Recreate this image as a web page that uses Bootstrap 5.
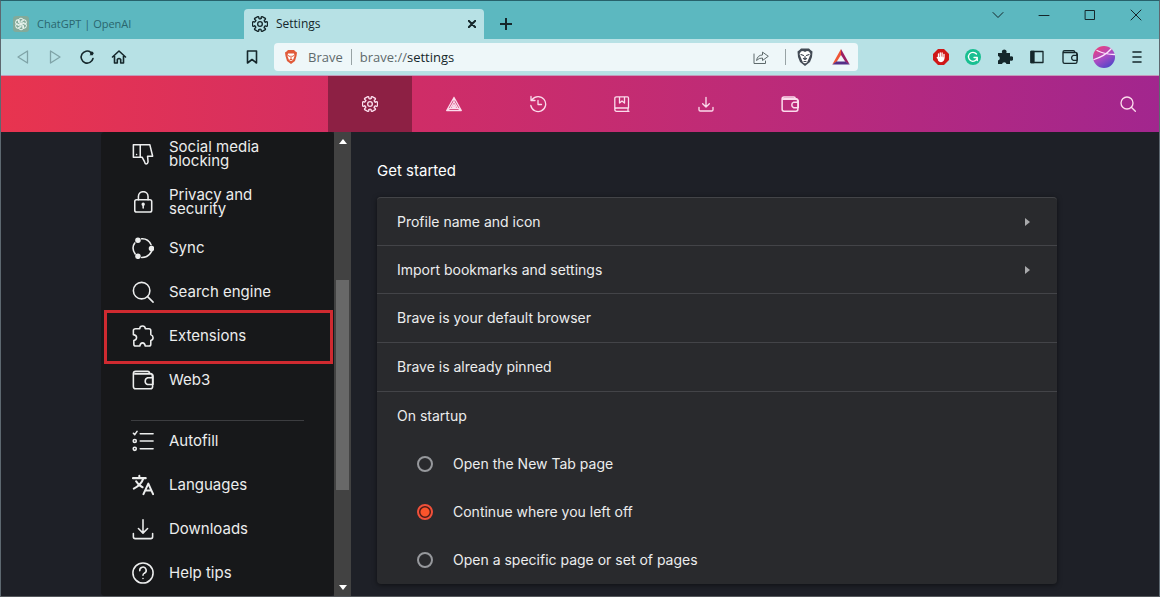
<!DOCTYPE html>
<html lang="en" data-bs-theme="dark">
<head>
<meta charset="utf-8">
<meta name="viewport" content="width=device-width, initial-scale=1">
<title>Settings</title>
<link href="https://cdn.jsdelivr.net/npm/bootstrap@5.3.0/dist/css/bootstrap.min.css" rel="stylesheet">
<style>
  body { font-family: Inter, "Open Sans", sans-serif; font-size: 14px; line-height: 20px; background: #1e2027; color: #eceded; }
  .window { border: 1px solid #5d6870; border-top-color: #27616b; border-bottom-color: #55585c; }
  svg { display: block; fill: none; stroke: currentColor; stroke-width: 2; stroke-linecap: round; stroke-linejoin: round; }
  button { background: none; border: 0; padding: 0; color: inherit; }
  .i16 { width: 16px; height: 16px; } .i18 { width: 18px; height: 18px; } .i22 { width: 22px; height: 22px; }
  .hair { stroke-width: 1; } .fine { stroke-width: 1.3; } .medium { stroke-width: 1.6; }

  /* Browser chrome */
  .chrome { font-family: "Open Sans", sans-serif; color: #15272b; font-size: 12px; }
  .tabstrip { background: #5cb8c0; height: 38px; }
  .page-tab { height: 30px; width: 240px; color: #15272b; }
  .page-tab.open { background: #b7e1e5; border-radius: 4px 4px 0 0; }
  .page-tab.idle { width: 243px; color: #2a666e; font-size: 11px; }
  .new-tab { width: 44px; height: 30px; }
  .win-btn { width: 46px; height: 28px; }
  .win-btn svg { width: 12px; height: 12px; stroke-width: 1; }
  .toolbar { background: #b7e1e5; height: 37px; display: grid; grid-template-columns: 273fr 584fr 301fr; border-bottom: 1px solid #c39abb; }
  .tools { padding: 0 6px; }
  .tool { width: 32px; height: 28px; }
  .tool.wide { width: 34px; }
  .faded { color: #7fa3a7; }
  .address { background: #eef7f9; border-radius: 4px; height: 28px; font-size: 13px; color: #5e6a6c; }
  .address b { font-weight: 400; color: #15272b; }
  .rule { width: 1px; height: 16px; background: #98a3a5; }

  /* Page navigation */
  .topnav { height: 56px; background: linear-gradient(90deg, #e8344f 0%, #cf2d67 36%, #bd2b78 65%, #a2268e 100%); display: grid; grid-template-columns: 1fr auto 1fr; color: #fbdcec; }
  .topnav a { width: 84px; color: inherit; }
  .topnav a.current { background: #8d2044; }
  .find { margin: 0 23px 0 auto; }

  .layout { max-width: 958px; min-height: 0; }
  .side { width: 233px; background: #17181a; border-radius: 4px; overflow: hidden; }
  .side ul { margin: -2px 0 0; }
  .side a { height: 44px; padding-left: 31px; gap: 15px; color: #eceded; text-decoration: none; font-size: 15px; line-height: 14px; }
  .side a.tall { height: 48px; }
  .side svg { width: 22px; height: 22px; stroke-width: 1.7; flex: none; }
  .side svg.bold { stroke-width: 2.2; }
  .side hr { margin: 18px 30px -2px; border-color: #3c3d40; opacity: 1; }
  .marked::after { content: ""; position: absolute; inset: -4px 1px -6px 3px; border: 3px solid #cf2a30; pointer-events: none; }
  .scroll { width: 17px; background: #424242; color: #fff; padding: 7px 0 6px; display: grid; grid-template-rows: 5px 135fr 209fr 94fr 5px; justify-items: center; }
  .thumb { width: 13px; background: #686868; }
  .scroll svg { width: 8px; height: 5px; fill: currentColor; stroke: none; }

  .content { padding: 29px 0 0 26px; }
  .content h1 { font-size: 15px; line-height: 20px; font-weight: 400; margin: 0 0 16px; }
  .panel { max-width: 680px; background: #292a2d; border-radius: 4px; box-shadow: 0 1px 5px #0008; }
  .item { height: 48px; padding: 0 27px 0 20px; border-top: 1px solid #434448; color: inherit; text-align: left; }
  .item.info { height: 49px; }
  .panel > .item:first-child { border-radius: 4px 4px 0 0; }
  .item svg { width: 5px; height: 8px; fill: #a8a9ab; stroke: none; }
  .option { height: 48px; padding-left: 40px; gap: 20px; }
  .option input { appearance: none; width: 16px; height: 16px; margin: 0; border: 2px solid #96989c; border-radius: 50%; background: transparent; }
  .option input:checked { border-color: #f0503a; background: radial-gradient(circle, #fb542b 4px, #4a1c17 5px); }
</style>
</head>
<body class="vh-100 overflow-hidden">
<svg class="d-none" aria-hidden="true">
  <symbol id="gear" viewBox="0 0 24 24">
    <g transform="translate(12 12)">
      <path id="tooth" d="M8-2.800 9.800-3.500Q11.300-3.500 11.300-2V2Q11.300 3.500 9.800 3.500L8 2.800Q6.200 3.500 6.400 5.500"/>
      <use href="#tooth" transform="rotate(60)"/><use href="#tooth" transform="rotate(120)"/><use href="#tooth" transform="rotate(180)"/><use href="#tooth" transform="rotate(240)"/><use href="#tooth" transform="rotate(300)"/>
      <circle r="3.500"/>
    </g>
  </symbol>
  <symbol id="wallet" viewBox="0 0 24 24"><path d="M22 8V6.500Q22 5 20.500 5H3.500M19 5V4.500Q19 2.500 17 2.500H4Q1.500 2.500 1.500 5V19Q1.500 21.500 4 21.500H20Q22.500 21.500 22.500 19V10.500M23 9.500H17a4 4 0 0 0 0 7.500H23V8Q23 5.500 20.500 5.500H3"/></symbol>
  <symbol id="download" viewBox="0 0 24 24"><path d="M12 2V16M7 11.500 12 16.500 17 11.500M1.500 17V20.500Q1.500 22.500 3.500 22.500H20.500Q22.500 22.500 22.500 20.500V17"/></symbol>
  <symbol id="search" viewBox="0 0 24 24"><circle cx="10.500" cy="10.500" r="9"/><path d="M17 17 23 23"/></symbol>
</svg>

<div class="window d-flex flex-column h-100">
  <header class="chrome">
    <div class="tabstrip d-flex">
      <div class="d-flex align-items-end">
        <div class="page-tab idle d-flex align-items-center gap-2 px-2">
          <svg class="ms-1" width="16" height="16" viewBox="0 0 16 16"><rect width="16" height="16" rx="3" fill="#83aa9a" stroke="none"/><g stroke="#e8f3ee" stroke-width="1"><path id="petal" d="M8 8 5.500 6.500V4Q6 2.200 8 2.200T10.500 4.500L8 6"/><use href="#petal" transform="rotate(60 8 8)"/><use href="#petal" transform="rotate(120 8 8)"/><use href="#petal" transform="rotate(180 8 8)"/><use href="#petal" transform="rotate(240 8 8)"/><use href="#petal" transform="rotate(300 8 8)"/></g></svg>
          <span>ChatGPT | OpenAI</span>
        </div>
        <div class="page-tab open d-flex align-items-center gap-2 px-2">
          <svg class="i16"><use href="#gear"/></svg>
          <span class="flex-grow-1">Settings</span>
          <button aria-label="Close tab"><svg width="8" height="8" viewBox="0 0 8 8"><path d="M.5.5 7.500 7.500M7.500.5.5 7.500"/></svg></button>
        </div>
        <button class="new-tab d-flex align-items-center justify-content-center" aria-label="New tab"><svg width="12" height="12" viewBox="0 0 12 12"><path d="M6 .5V11.500M.5 6H11.500"/></svg></button>
      </div>
      <div class="d-flex ms-auto">
        <button class="win-btn d-flex align-items-center justify-content-center" aria-label="Search tabs"><svg viewBox="0 0 12 12"><path d="M1 3.500 6 8.500 11 3.500"/></svg></button>
        <button class="win-btn d-flex align-items-center justify-content-center" aria-label="Minimize"><svg viewBox="0 0 12 12"><path d="M1 6.500H11"/></svg></button>
        <button class="win-btn d-flex align-items-center justify-content-center" aria-label="Maximize"><svg viewBox="0 0 12 12"><path d="M1.500 1.500H10.500V10.500H1.500Z"/></svg></button>
        <button class="win-btn d-flex align-items-center justify-content-center" aria-label="Close"><svg viewBox="0 0 12 12"><path d="M1 1 11 11M11 1 1 11"/></svg></button>
      </div>
    </div>
    <div class="toolbar align-items-center">
      <div class="tools d-flex">
        <button class="tool faded d-flex align-items-center justify-content-center" aria-label="Back"><svg class="fine" width="14" height="16" viewBox="0 0 14 16"><path d="M11.500 2V14L2 8Z"/></svg></button>
        <button class="tool faded d-flex align-items-center justify-content-center" aria-label="Forward"><svg class="fine" width="14" height="16" viewBox="0 0 14 16"><path d="M2.500 2V14L12 8Z"/></svg></button>
        <button class="tool d-flex align-items-center justify-content-center" aria-label="Reload"><svg class="i16 medium" viewBox="0 0 16 16"><path d="M11.800 3.300A6 6 0 1 0 14 9.500"/><circle cx="12.800" cy="4.300" r="1.700" fill="currentColor" stroke="none"/><path d="M13.800 3V6.300H10.500Z" fill="currentColor" stroke="none"/></svg></button>
        <button class="tool d-flex align-items-center justify-content-center" aria-label="Home"><svg class="i16 medium" viewBox="0 0 16 16"><path d="M1.500 8 8 2 14.500 8M3.500 7V14H6.300V10.500Q8 8.500 9.700 10.500V14H12.500V7"/></svg></button>
        <button class="tool d-flex align-items-center justify-content-center ms-auto" aria-label="Bookmark"><svg class="i16 medium" viewBox="0 0 16 16"><path d="M3.500 2H12.500V14L8 10.500 3.500 14Z"/></svg></button>
      </div>
      <div class="address d-flex align-items-center">
        <svg class="ms-2 me-2 i18" viewBox="0 0 18 18"><path d="M6 2H12L13.500 3.500 15 4.500 14.500 8 13 13 9 16 5 13 3.500 8 3 4.500 4.500 3.500Z" fill="#e05a3a" stroke="none"/><path d="M6 5.500H12L12.500 8 11 12 9 13 7 12 5.500 8Z" fill="#fff" stroke="none"/><path d="M6 7.500 8 8.500M12 7.500 10 8.500M9 8V11M8 11.500H10" stroke="#e05a3a" stroke-width="1"/></svg>
        <span>Brave</span><span class="rule mx-2"></span><span>brave://<b>settings</b></span>
        <button class="ms-auto me-3" aria-label="Share"><svg class="i16 hair" viewBox="0 0 16 16"><path d="M1 5V14.500H12.500V12M9.500 3.500V6Q4.500 6 3.500 11.500 6 8.800 9.500 9V11.500L15 7.500Z"/></svg></button>
        <span class="rule"></span>
        <button class="ms-2" aria-label="Shields"><svg width="22" height="20" viewBox="0 0 22 20"><path d="M7 1.500H15L16.500 3 18.500 4.500 18 10 16 15 11 19 6 15 4 10 3.500 4.500 5.500 3Z" fill="#434b55" stroke="none"/><path d="M7 4.500 9 4 11 5 13 4 15 4.500 16.500 7 15 11 13 15.500 11 16.500 9 15.500 7 11 5.500 7Z" fill="#fff" stroke="none"/><path d="M7 7.500 9.500 8.500M15 7.500 12.500 8.500M11 9.500V12M9.500 11.500 11 12.500 12.500 11.500M10 14.500H12" stroke="#434b55" stroke-width="1.200"/></svg></button>
        <button class="mx-2 ps-2" aria-label="Rewards"><svg width="18" height="18" viewBox="0 0 18 18"><path d="M9 1 .3 16.500 4.500 14 9 7Z" fill="#ef5535" stroke="none"/><path d="M9 1 17.700 16.500 13.500 14 9 7Z" fill="#9b1f63" stroke="none"/><path d="M.3 16.500H17.700L13.500 13.500H4.500Z" fill="#542f87" stroke="none"/></svg></button>
      </div>
      <div class="tools d-flex justify-content-end">
        <button class="tool d-flex align-items-center justify-content-center" aria-label="Ad blocker"><svg class="i16" viewBox="0 0 16 16"><path d="M5 0H11L16 5V11L11 16H5L0 11V5Z" fill="#cf1717" stroke="none"/><path d="M5.500 5V9M7.300 3.800V8.500M9.100 4V8.500M11 5.300V9M5.500 9Q5 12.500 8 12.500 10.500 12.500 11 9L8 8.500ZM4.300 8.500 6 10.500" fill="#fff" stroke="#fff" stroke-width="1.300"/></svg></button>
        <button class="tool d-flex align-items-center justify-content-center" aria-label="Writing assistant"><svg class="i16" viewBox="0 0 16 16"><circle cx="8" cy="8" r="8" fill="#19bf91" stroke="none"/><path d="M11.500 5A4.500 4.500 0 1 0 12.300 9M9 8.500H12.300V11.500" stroke="#fff" stroke-width="1.300"/></svg></button>
        <button class="tool d-flex align-items-center justify-content-center" aria-label="Extensions"><svg class="i16" viewBox="0 0 16 16"><path d="M1 4H5.300A2.300 2.300 0 1 1 9.200 4H13V7.500A2.300 2.300 0 1 1 13 11.500V15H9.500A2.300 2.300 0 0 0 5 15H1V11.500A2.300 2.300 0 0 0 1 7Z" fill="currentColor" stroke="none"/></svg></button>
        <button class="tool d-flex align-items-center justify-content-center" aria-label="Sidebar"><svg class="i16 fine" viewBox="0 0 16 16"><path d="M2 2.500H14V13.500H2Z"/><path d="M2 2.500H5V13.500H2Z" fill="currentColor"/></svg></button>
        <button class="tool wide d-flex align-items-center justify-content-center" aria-label="Wallet"><svg class="i16"><use href="#wallet"/></svg></button>
        <button class="tool wide d-flex align-items-center justify-content-center" aria-label="Profile"><svg class="i22" viewBox="0 0 22 22"><defs><linearGradient id="avatar" x1=".2" y1="0" x2=".8" y2="1"><stop offset="0" stop-color="#ee3f79"/><stop offset=".5" stop-color="#a94bc4"/><stop offset="1" stop-color="#4746c9"/></linearGradient></defs><circle cx="11" cy="11" r="11" fill="url(#avatar)" stroke="none"/><path d="M1 13.500Q12 10 18 3M4 4.500Q12 8.500 21.500 8.500" stroke="#fbe3fb" stroke-width="1.300"/></svg></button>
        <button class="tool d-flex align-items-center justify-content-center" aria-label="Menu"><svg class="i16 medium" viewBox="0 0 16 16"><path d="M4 3H12M4 8H12M4 13H12"/></svg></button>
      </div>
    </div>
  </header>

  <nav class="topnav flex-shrink-0" aria-label="Pages">
    <span></span>
    <div class="d-flex">
      <a href="#" class="current d-flex align-items-center justify-content-center" aria-label="Settings"><svg class="i16"><use href="#gear"/></svg></a>
      <a href="#" class="d-flex align-items-center justify-content-center" aria-label="Rewards"><svg class="i16 fine" viewBox="0 0 16 16"><path d="M8 1.500 15.300 14.500H.7ZM8 5.500 12 12.300H4ZM8 1.500V5.500M15.300 14.500 12 12.300M.7 14.500 4 12.300M8 8.500 9.600 11H6.400Z"/></svg></a>
      <a href="#" class="d-flex align-items-center justify-content-center" aria-label="History"><svg class="i18 fine" viewBox="0 0 18 18"><path d="M3.200 4.500A7.500 7.500 0 1 1 1.800 10.500M2 1.500V5.500H6M9 5.500V9.500H12.500"/></svg></a>
      <a href="#" class="d-flex align-items-center justify-content-center" aria-label="Bookmarks"><svg class="i16 fine" viewBox="0 0 16 16"><path d="M15 15.300H2.500Q.8 15.300.8 13.500V2.500Q.8.8 2.500.8H13.500Q14.500.8 14.500 2V12H2.500Q.8 12 .8 13.500M14 12V15M5.500 1V7L8 5 10.500 7V1"/></svg></a>
      <a href="#" class="d-flex align-items-center justify-content-center" aria-label="Downloads"><svg class="i16"><use href="#download"/></svg></a>
      <a href="#" class="d-flex align-items-center justify-content-center" aria-label="Wallet"><svg class="i18"><use href="#wallet"/></svg></a>
    </div>
    <button class="find" aria-label="Search settings"><svg class="i16"><use href="#search"/></svg></button>
  </nav>

  <div class="layout d-flex flex-grow-1 w-100 mx-auto">
    <nav class="side flex-shrink-0" aria-label="Settings sections">
      <ul class="list-unstyled">
        <li><a href="#" class="tall d-flex align-items-center"><svg viewBox="0 0 24 24"><path d="M1.500 2H19.500L22.500 14.500H17L17.500 20.500Q17 23 15.500 23 14 22.500 13.500 20L11 15.500H1.500ZM9 2V15.500M5 12.500V12.600"/></svg><span>Social media<br>blocking</span></a></li>
        <li><a href="#" class="tall d-flex align-items-center"><svg viewBox="0 0 24 24"><rect x="3" y="9.500" width="18.500" height="13.500" rx="2"/><path d="M7 9.500V6A5 5 0 0 1 17.500 6V9.500M12.200 15V18.500"/><circle cx="12.200" cy="14.500" r="1" fill="currentColor"/></svg><span>Privacy and<br>security</span></a></li>
        <li><a href="#" class="d-flex align-items-center"><svg viewBox="0 0 24 24"><path d="M10.500 2Q17.500 1.500 20.800 8.500M21.500 15.500Q18 22.500 10.500 22.300M3.500 18.500Q-1 12 3 6.500"/><g fill="currentColor"><circle cx="6.500" cy="3.500" r="2.200"/><circle cx="21.300" cy="12.500" r="2.200"/><circle cx="6.500" cy="21" r="2.200"/></g></svg><span>Sync</span></a></li>
        <li><a href="#" class="d-flex align-items-center"><svg><use href="#search"/></svg><span>Search engine</span></a></li>
        <li><a href="#" class="marked position-relative d-flex align-items-center"><svg viewBox="0 0 24 24"><path d="M4 4H8.500Q8.500 1 11.500 1T14.500 4H18.500Q20.500 4 20.500 6V10.500Q23 11.500 23 14T20.500 17V21Q20.500 23 18.500 23H14.500Q14 19.500 11.500 19.500T8.500 23H4Q2 23 2 21V17Q5 16 5 13.500T1.500 10.500V6Q1.500 4 4 4Z"/></svg><span>Extensions</span></a></li>
        <li><a href="#" class="d-flex align-items-center"><svg><use href="#wallet"/></svg><span>Web3</span></a></li>
        <li><hr></li>
        <li><a href="#" class="d-flex align-items-center"><svg viewBox="0 0 24 24"><path d="M9 4H23M9 12H23M9 20.500H23M1.500 3.500 3 5 5.500 1.500"/><circle cx="3" cy="12" r="1.700"/><circle cx="3" cy="20.500" r="1.700"/></svg><span>Autofill</span></a></li>
        <li><a href="#" class="d-flex align-items-center"><svg class="bold" viewBox="0 0 24 24"><path d="M1 4.500H15M8 2V4.500M12.500 4.500Q10 12 2 16M4.500 8Q7 12.500 11.500 14.500M12.500 22 17.800 10.500 23 22M14.500 18H21"/></svg><span>Languages</span></a></li>
        <li><a href="#" class="d-flex align-items-center"><svg><use href="#download"/></svg><span>Downloads</span></a></li>
        <li><a href="#" class="d-flex align-items-center"><svg viewBox="0 0 24 24"><circle cx="12" cy="12" r="11"/><path d="M8.500 9.500A3.500 3.500 0 1 1 13.500 12.200Q12 13 12 14.500M12 18V18.100"/></svg><span>Help tips</span></a></li>
      </ul>
    </nav>
    <div class="scroll flex-shrink-0" aria-hidden="true">
      <svg viewBox="0 0 8 5"><path d="M0 5 4 0 8 5Z"/></svg><span></span><div class="thumb"></div><span></span><svg viewBox="0 0 8 5"><path d="M0 0 4 5 8 0Z"/></svg>
    </div>

    <main class="content flex-grow-1">
      <h1>Get started</h1>
      <div class="panel">
        <button class="item w-100 d-flex align-items-center justify-content-between">Profile name and icon<svg viewBox="0 0 5 8"><path d="M0 0 5 4 0 8Z"/></svg></button>
        <button class="item w-100 d-flex align-items-center justify-content-between">Import bookmarks and settings<svg viewBox="0 0 5 8"><path d="M0 0 5 4 0 8Z"/></svg></button>
        <div class="item info d-flex align-items-center">Brave is your default browser</div>
        <div class="item info d-flex align-items-center">Brave is already pinned</div>
        <div role="radiogroup" aria-labelledby="startup">
          <div id="startup" class="item info d-flex align-items-center">On startup</div>
          <label class="option d-flex align-items-center"><input type="radio" name="startup"><span>Open the New Tab page</span></label>
          <label class="option d-flex align-items-center"><input type="radio" name="startup" checked><span>Continue where you left off</span></label>
          <label class="option d-flex align-items-center"><input type="radio" name="startup"><span>Open a specific page or set of pages</span></label>
        </div>
      </div>
    </main>
  </div>
</div>
<script src="https://cdn.jsdelivr.net/npm/bootstrap@5.3.0/dist/js/bootstrap.bundle.min.js"></script>
</body>
</html>
